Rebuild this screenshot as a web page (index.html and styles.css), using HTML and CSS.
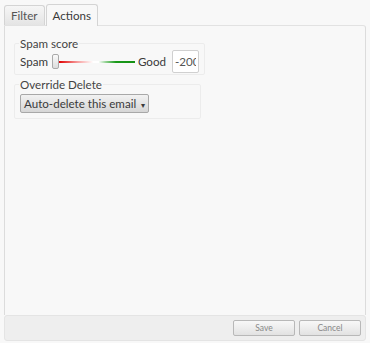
FILE: index.html
```html
<!DOCTYPE html>
<html lang="en">
<head>
  <meta charset="UTF-8">
  <title>Filter actions</title>
  <link rel="stylesheet" href="styles.css">
</head>
<body>
  <div class="dialog">
    <div class="tabs">
      <span class="tab">Filter</span>
      <span class="tab active">Actions</span>
    </div>
    <div class="panel">
      <fieldset class="group">
        <legend>Spam score</legend>
        <div class="score-row">
          <span>Spam</span>
          <div class="slider">
            <span class="handle"></span>
            <span class="track"></span>
          </div>
          <span>Good</span>
          <input class="score" type="text" value="-200">
        </div>
      </fieldset>
      <fieldset class="group">
        <legend>Override Delete</legend>
        <button class="select">Auto-delete this email <span class="caret">▾</span></button>
      </fieldset>
    </div>
    <div class="buttons">
      <button class="btn">Save</button>
      <button class="btn">Cancel</button>
    </div>
  </div>
</body>
</html>
```

FILE: styles.css
```css
*, *::before, *::after { box-sizing: border-box; }
html, body { height: 100%; }
body {
  margin: 0; background: #f8f8f8; color: #3a3a3a;
  font-family: Lato, "Open Sans", sans-serif; font-size: 11.6px;
}
.dialog {
  display: flex; flex-direction: column; height: 100%;
  padding: 4px 4px 2px 4px;
}
/* Tabs */
.tabs { display: flex; align-items: flex-end; height: 21px; }
.tab {
  padding: 0 6px; height: 20px; line-height: 19px;
  border: 1px solid #d4d4d4; border-bottom: none;
  border-radius: 3px 3px 0 0;
  background: linear-gradient(#f6f6f6, #e4e4e4); color: #555;
}
.tab.active {
  height: 22px; line-height: 21px; margin-left: 1px;
  background: #f8f8f8; color: #3a3a3a; position: relative; top: 1px;
}
/* Panel */
.panel {
  flex: 1; border: 1px solid #dcdcdc; border-top-color: #e2e2e2;
  border-bottom: none; border-radius: 0 3px 0 0;
  padding: 11px 0 0 9px;
  display: flex; flex-direction: column; align-items: flex-start; gap: 3px;
}
.group {
  width: 187px; margin: 0; padding: 0 5px 1px 5px;
  border: 1px solid #ececec; border-radius: 2px;
}
.group + .group { padding-bottom: 5px; }
.group legend { padding: 0 1px; margin-left: -1px; color: #444; line-height: 13px; }
.score-row { display: flex; align-items: center; gap: 3px; }
.slider { display: flex; align-items: center; width: 83px; margin-left: 1px; }
.handle {
  width: 7px; height: 15px; border: 1px solid #aaa; border-radius: 2px;
  background: linear-gradient(#fafafa, #dcdcdc);
}
.track {
  flex: 1; height: 2px;
  background: linear-gradient(90deg, #e00000 0%, #f7a0a0 25%, #ffffff 45%, #ffffff 52%, #90d090 62%, #1a9a1a 75%, #149014 100%);
}
.score {
  width: 27px; height: 23px; margin-left: 3px; padding: 0 2px;
  border: 1px solid #d0d0d0; border-radius: 2px; background: #fff;
  font: inherit; color: #555;
}
.select {
  margin-top: 3px; height: 19px; padding: 0 3px;
  font: inherit; color: #3a3a3a;
  border: 1px solid #a8a8a8; border-radius: 2px;
  background: linear-gradient(#f2f2f2, #d6d6d6);
}
.caret { font-size: 8px; margin-left: 2px; }
/* Bottom button bar */
.buttons {
  display: flex; justify-content: flex-end; gap: 4px;
  height: 26px; padding: 4px 4px 0 0;
  background: #eeeeee; border: 1px solid #e4e4e4; border-radius: 3px;
}
.btn {
  width: 62px; height: 16px; padding: 0;
  font-family: Lato, sans-serif; font-size: 8.5px; color: #888;
  border: 1px solid #b8b8b8; border-radius: 2px;
  background: linear-gradient(#f8f8f8, #e2e2e2);
}
```
